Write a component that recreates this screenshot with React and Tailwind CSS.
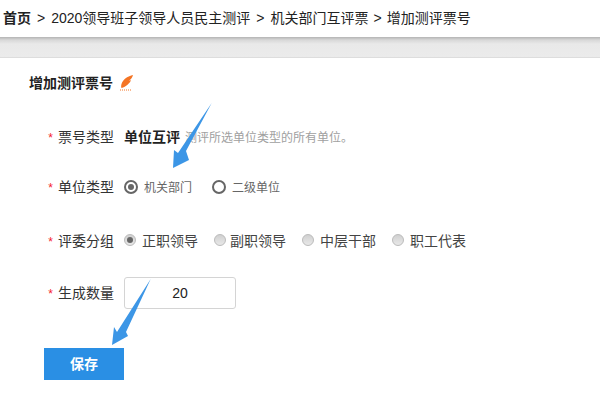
import React from 'react';

const Label = ({ children }) => (
  <div className="w-[66px] shrink-0 text-right text-[14px] leading-5 text-[#333]">
    <span className="mr-[5px] text-[12px] text-[#f5222d]">*</span>
    {children}
  </div>
);

const OutlineRadio = ({ checked, label, className }) => (
  <div className={`flex items-center ${className || ''}`}>
    <span className="flex h-[14px] w-[14px] items-center justify-center rounded-full border-2 border-[#666] bg-white">
      {checked && <span className="h-[6px] w-[6px] rounded-full bg-[#666]" />}
    </span>
    <span className="ml-[6px] mt-[2px] text-[12px] leading-5 text-[#666]">{label}</span>
  </div>
);

const SoftRadio = ({ checked, label, className, labelClass }) => (
  <div className={`flex items-center ${className || ''}`}>
    <span className="mb-[2px] flex h-[12px] w-[12px] items-center justify-center rounded-full border border-[#bbbbbb] bg-[linear-gradient(#d0d0d0,#e8e8e8)]">
      {checked && <span className="h-[6px] w-[6px] rounded-full bg-[#666]" />}
    </span>
    <span className={`text-[14px] leading-5 text-[#444] ${labelClass}`}>{label}</span>
  </div>
);

const Feather = () => (
  <svg width="14" height="16" viewBox="0 0 14 16" className="ml-[7px]">
    <path d="M13 0 C8 1 3 4 1.5 9 C1 11 1 12 1.5 13 C6 12 10 8 11 5 L9 6 C10.5 4.5 12.5 2.5 13 0 Z" fill="#f47424" />
    <path d="M0 15 H11" stroke="#f47424" strokeWidth="1" strokeDasharray="1 1" />
  </svg>
);

export default function App() {
  return (
    <div className="relative h-[400px] w-[600px] overflow-hidden bg-white font-['Liberation_Sans','Noto_Sans_CJK_SC',sans-serif]">
      <div className="flex h-[37px] items-center pl-[3px] text-[14px] text-[#222]">
        <span className="font-bold">首页</span>
        <span className="mx-[6px]">&gt;</span>
        <span>2020领导班子领导人员民主测评</span>
        <span className="mx-[6px]">&gt;</span>
        <span>机关部门互评票</span>
        <span className="mx-[5px]">&gt;</span>
        <span>增加测评票号</span>
      </div>
      <div className="h-[21px] border-b border-[#dddddd] bg-[linear-gradient(#b4b4b4,#d8d8d8_3px,#e9e9e9_7px,#ebebeb)]" />

      <div className="flex h-[52px] items-center pb-[2px] pl-[29px]">
        <span className="text-[14px] font-bold text-[#222]">增加测评票号</span>
        <Feather />
      </div>

      <div className="pl-[48px]">
        <div className="mt-[17px] flex h-5 items-center">
          <Label>票号类型</Label>
          <span className="ml-[10px] text-[14px] font-bold text-[#222]">单位互评</span>
          <span className="ml-[5px] mt-[2px] text-[12px] text-[#a0a0a0]">测评所选单位类型的所有单位。</span>
        </div>

        <div className="mt-[30px] flex h-5 items-center">
          <Label>单位类型</Label>
          <OutlineRadio checked label="机关部门" className="ml-[10px]" />
          <OutlineRadio label="二级单位" className="ml-[20px]" />
        </div>

        <div className="mt-[34px] flex h-5 items-center">
          <Label>评委分组</Label>
          <SoftRadio checked label="正职领导" className="ml-[10px]" labelClass="ml-[6px]" />
          <SoftRadio label="副职领导" className="ml-[16px]" labelClass="ml-[4px]" />
          <SoftRadio label="中层干部" className="ml-[16px]" labelClass="ml-[6px]" />
          <SoftRadio label="职工代表" className="ml-[16px]" labelClass="ml-[6px]" />
        </div>

        <div className="mt-[26px] flex h-[32px] items-center">
          <Label>生成数量</Label>
          <input
            readOnly
            value="20"
            className="ml-[10px] h-[32px] w-[112px] rounded-[3px] border border-[#d4d4d4] text-center text-[14px] text-[#222] outline-none"
          />
        </div>

        <button className="ml-[-4px] mt-[39px] block h-[32px] w-[80px] bg-[#2a8fe4] text-[14px] font-bold text-white">
          保存
        </button>
      </div>

      {/* annotation arrows drawn over the form */}
      <svg width="600" height="400" className="pointer-events-none absolute left-0 top-0">
        <polygon points="211.7,103 186,151 189,160 173,168 174,150 178,153" fill="#3c96e6" />
        <polygon points="150.7,279 126,332 128,336 112,345 114,327 117,332" fill="#3c96e6" />
      </svg>
    </div>
  );
}
